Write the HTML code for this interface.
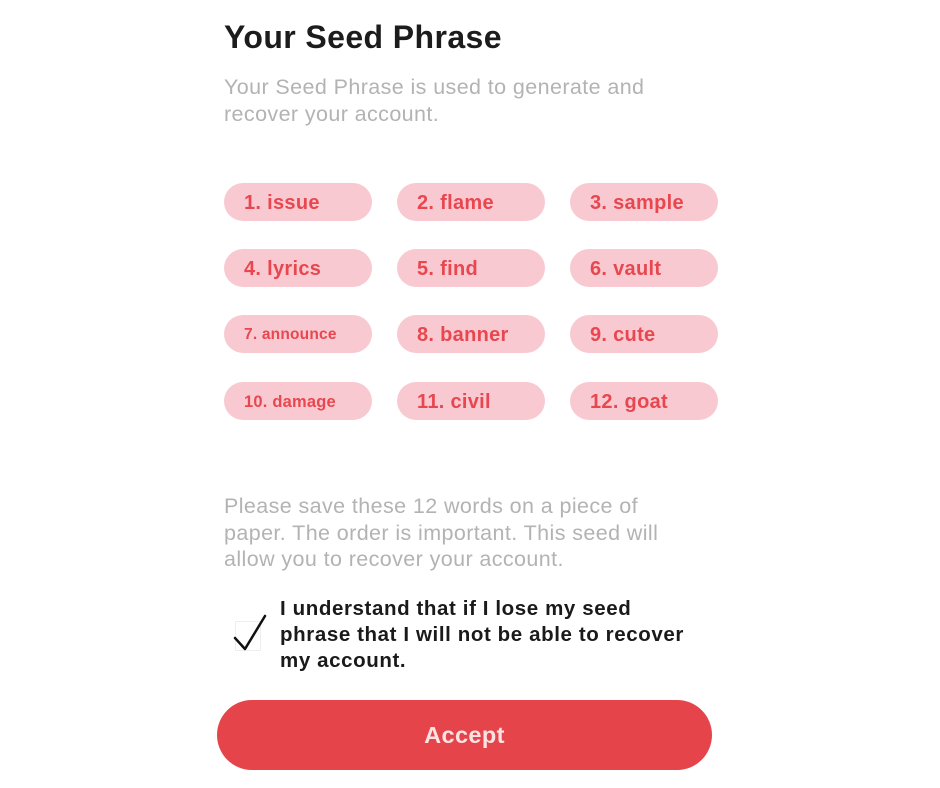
<!DOCTYPE html>
<html><head><style>
body{margin:0;width:940px;height:788px;background:#fff;font-family:"Liberation Sans",sans-serif;position:relative;overflow:hidden}
.a{position:absolute;white-space:nowrap}
h1{position:absolute;left:224px;top:19px;margin:0;font-size:32px;font-weight:bold;color:#1c1c1c;letter-spacing:0.4px}
.g{color:#b3b3b3;font-size:21.5px;line-height:26.5px;letter-spacing:0.4px}
.p{position:absolute;width:148px;height:38px;border-radius:19px;background:#f9c9d2;color:#e8474f;font-size:20px;font-weight:bold;letter-spacing:0.3px;line-height:40px;text-indent:20px;box-sizing:border-box;white-space:nowrap}
.btn{position:absolute;left:217px;top:700px;width:495px;height:70px;border-radius:35px;background:#e5444a;color:#fbe3e4;font-size:23.5px;font-weight:bold;text-align:center;line-height:70px;letter-spacing:0.4px}
.c{position:absolute;left:280px;top:596px;font-size:20.5px;font-weight:bold;color:#1a1a1a;line-height:26px;letter-spacing:0.6px;white-space:nowrap}
</style></head><body>
<h1>Your Seed Phrase</h1>
<div class="a g" style="left:224px;top:74px">Your Seed Phrase is used to generate and<br>recover your account.</div>
<div class="p" style="left:224px;top:183px">1. issue</div>
<div class="p" style="left:397px;top:183px">2. flame</div>
<div class="p" style="left:570px;top:183px">3. sample</div>
<div class="p" style="left:224px;top:249px">4. lyrics</div>
<div class="p" style="left:397px;top:249px">5. find</div>
<div class="p" style="left:570px;top:249px">6. vault</div>
<div class="p" style="left:224px;top:315px;font-size:15.5px;letter-spacing:0.2px">7. announce</div>
<div class="p" style="left:224px;top:382px;font-size:16.5px;letter-spacing:0.2px">10. damage</div>
<div class="p" style="left:397px;top:315px">8. banner</div>
<div class="p" style="left:570px;top:315px">9. cute</div>
<div class="p" style="left:397px;top:382px">11. civil</div>
<div class="p" style="left:570px;top:382px">12. goat</div>
<div class="a g" style="left:224px;top:493px">Please save these 12 words on a piece of<br>paper. The order is important. This seed will<br>allow you to recover your account.</div>
<div style="position:absolute;left:235px;top:621px;width:24px;height:28px;border:1px solid #eee"></div>
<svg style="position:absolute;left:230px;top:612px" width="40" height="42"><path d="M5 26 L15 37 L35 4" fill="none" stroke="#111" stroke-width="2.5" stroke-linecap="round" stroke-linejoin="round"/></svg>
<div class="c">I understand that if I lose my seed<br>phrase that I will not be able to recover<br>my account.</div>
<div class="btn">Accept</div>
</body></html>
